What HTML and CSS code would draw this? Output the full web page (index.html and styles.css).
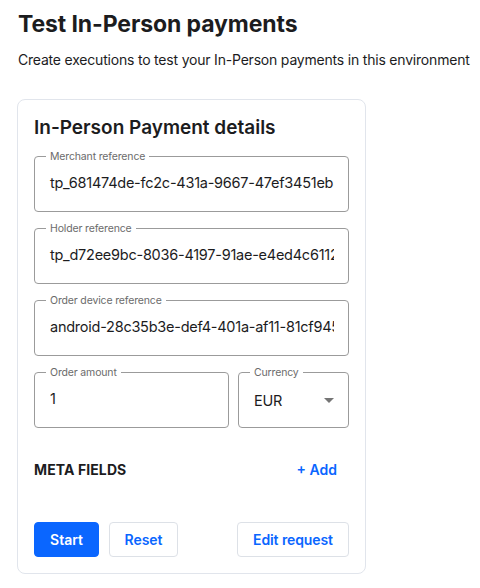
FILE: index.html
```html
<!DOCTYPE html>
<html lang="en">
<head>
<meta charset="utf-8">
<title>Test In-Person payments</title>
<link rel="stylesheet" href="styles.css">
</head>
<body>
<div class="page">
  <h1 class="title">Test In-Person payments</h1>
  <p class="subtitle">Create executions to test your In-Person payments in this environment</p>
  <section class="card">
    <h2 class="card-title">In-Person Payment details</h2>
    <div class="fields">
      <div class="field">
        <span class="field-label">Merchant reference</span>
        <div class="field-value">tp_681474de-fc2c-431a-9667-47ef3451eb5c</div>
      </div>
      <div class="field">
        <span class="field-label">Holder reference</span>
        <div class="field-value">tp_d72ee9bc-8036-4197-91ae-e4ed4c6112ab</div>
      </div>
      <div class="field">
        <span class="field-label">Order device reference</span>
        <div class="field-value">android-28c35b3e-def4-401a-af11-81cf945a0d2e</div>
      </div>
      <div class="row">
        <div class="field amount">
          <span class="field-label">Order amount</span>
          <div class="field-value">1</div>
        </div>
        <div class="field currency">
          <span class="field-label">Currency</span>
          <div class="select-value">
            <span>EUR</span>
            <svg class="caret" width="10" height="5" viewBox="0 0 10 5"><path d="M0 0 L10 0 L5 5 Z" fill="#757575"/></svg>
          </div>
        </div>
      </div>
    </div>
    <div class="meta">
      <span class="meta-title">META FIELDS</span>
      <span class="link">+ Add</span>
    </div>
    <div class="actions">
      <div class="actions-left">
        <button class="btn btn-primary">Start</button>
        <button class="btn btn-outline">Reset</button>
      </div>
      <button class="btn btn-outline btn-wide">Edit request</button>
    </div>
  </section>
</div>
</body>
</html>
```
FILE: styles.css
```css
* { box-sizing: border-box; }
html, body { margin: 0; padding: 0; background: #ffffff; }
body {
  font-family: Inter, "Noto Sans", "Liberation Sans", sans-serif;
  color: #1d1d1f;
}
.page { padding: 8px 0 0 17px; }
.title {
  margin: 0;
  padding-left: 1px;
  font-size: 23px;
  line-height: 32px;
  font-weight: 700;
  color: #1c1c1e;
  letter-spacing: -0.1px;
}
.subtitle {
  margin: 10px 0 0 0;
  padding-left: 1px;
  font-size: 14px;
  line-height: 20px;
  color: #1c1c1e;
  letter-spacing: -0.2px;
  white-space: nowrap;
}
.card {
  margin-top: 29px;
  width: 349px;
  border: 1px solid #e1e5ec;
  border-radius: 8px;
  padding: 14px 16px 16px 16px;
}
.card-title {
  margin: 0;
  font-size: 19px;
  line-height: 28px;
  font-weight: 600;
  color: #1c1c1e;
}
.fields {
  margin-top: 14px;
  display: flex;
  flex-direction: column;
  gap: 16px;
}
.field {
  position: relative;
  height: 56px;
  border: 1px solid #9b9b9b;
  border-radius: 4px;
}
.field-label {
  position: absolute;
  top: -7px;
  left: 11px;
  padding: 0 4px;
  background: #ffffff;
  font-size: 10.5px;
  line-height: 13px;
  letter-spacing: -0.15px;
  color: #6b6b6b;
  white-space: nowrap;
}
.field-value {
  padding: 16px 14px 0 15px;
  font-size: 14.5px;
  line-height: 20px;
  letter-spacing: -0.25px;
  color: #1c1c1e;
  white-space: nowrap;
  overflow: hidden;
  clip-path: inset(0 14px 0 0);
}
.row { display: flex; gap: 9px; }
.amount { flex: 0 0 195px; }
.currency { flex: 1 1 auto; }
.select-value {
  height: 100%;
  display: flex;
  align-items: center;
  justify-content: space-between;
  padding: 0 14px 0 15px;
  font-size: 14.5px;
  letter-spacing: -0.25px;
  color: #1c1c1e;
}
.caret { display: block; }
.meta {
  margin-top: 33px;
  display: flex;
  justify-content: space-between;
  align-items: center;
  padding-right: 12px;
}
.meta-title {
  font-size: 14px;
  font-weight: 700;
  color: #1c1c1e;
  letter-spacing: 0.1px;
}
.link {
  font-size: 14px;
  font-weight: 600;
  color: #0a66ff;
}
.actions {
  margin-top: 44px;
  display: flex;
  justify-content: space-between;
}
.actions-left { display: flex; gap: 10px; }
.btn {
  height: 35px;
  border-radius: 4px;
  font-family: Inter, "Noto Sans", "Liberation Sans", sans-serif;
  font-size: 14px;
  font-weight: 600;
  padding: 0;
  white-space: nowrap;
  cursor: pointer;
}
.btn-primary {
  background: #0a66ff;
  color: #ffffff;
  border: 1px solid #0a66ff;
  width: 65px;
}
.btn-outline {
  background: #ffffff;
  color: #0a66ff;
  border: 1px solid #dde1e7;
  width: 69px;
}
.btn-wide { width: 112px; letter-spacing: -0.1px; }
```
